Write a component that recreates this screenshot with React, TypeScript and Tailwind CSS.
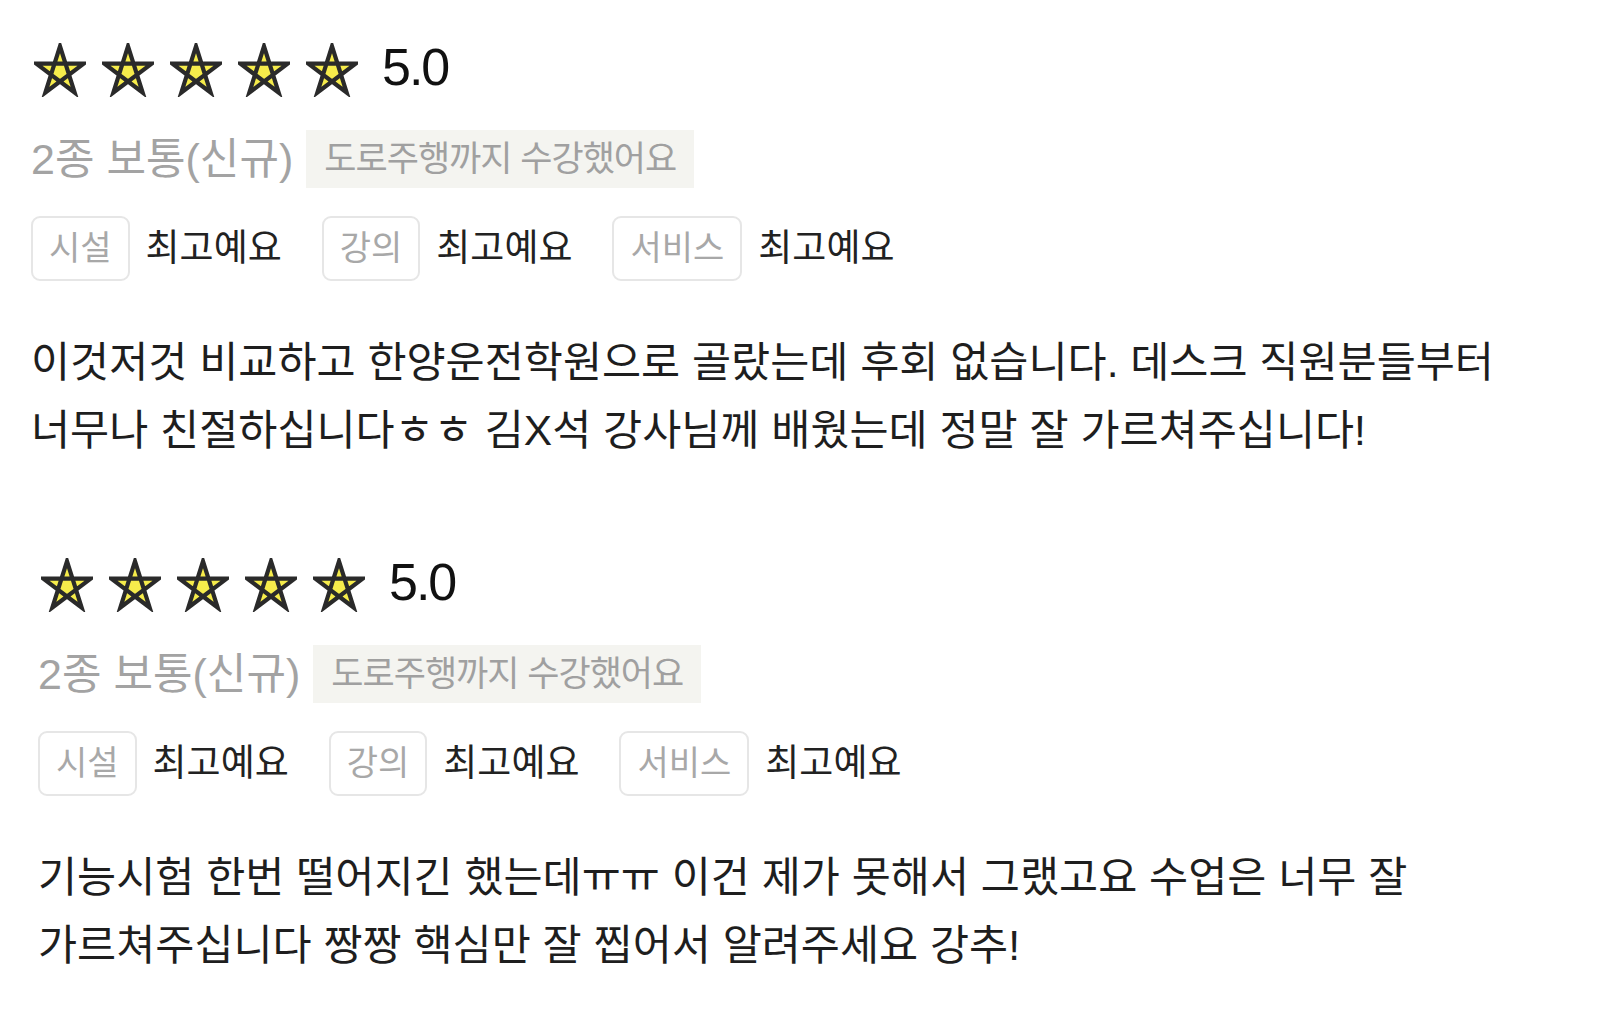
const reviews = [
  {
    ml: "",
    lines: [
      "이것저것 비교하고 한양운전학원으로 골랐는데 후회 없습니다. 데스크 직원분들부터",
      "너무나 친절하십니다ㅎㅎ 김X석 강사님께 배웠는데 정말 잘 가르쳐주십니다!",
    ],
  },
  {
    ml: "ml-[7px]",
    lines: [
      "기능시험 한번 떨어지긴 했는데ㅠㅠ 이건 제가 못해서 그랬고요 수업은 너무 잘",
      "가르쳐주십니다 짱짱 핵심만 잘 찝어서 알려주세요 강추!",
    ],
  },
];

const ratings = ["시설", "강의", "서비스"];

function Star() {
  return (
    <svg width="52" height="54" viewBox="0 0 100 100" preserveAspectRatio="none">
      <polygon
        points="50,6 78.2,91.8 4.4,38.2 95.6,38.2 21.8,91.8"
        fill="#f6ec4b"
        stroke="#2a2a2a"
        strokeWidth="8"
        strokeLinejoin="miter"
      />
    </svg>
  );
}

function Review({ ml, lines }: { ml: string; lines: string[] }) {
  return (
    <div className={ml}>
      {/* Stars + score */}
      <div className="flex items-center h-[54px]">
        <div className="flex gap-[16px] ml-[3px]">
          {[0, 1, 2, 3, 4].map((i) => (
            <Star key={i} />
          ))}
        </div>
        <span className="ml-[24px] -mt-[6px] text-[52px] leading-none tracking-[-2px] text-[#111] font-['Liberation_Sans',sans-serif]">
          5.0
        </span>
      </div>

      {/* License + course */}
      <div className="flex items-center gap-[13px] mt-[33px]">
        <span className="text-[43px] leading-none text-[#a3a3a3]">
          2종 보통(신규)
        </span>
        <span className="h-[58px] flex items-center px-[18px] bg-[#f4f4f0] text-[35px] tracking-[-1px] text-[#a0a0a0]">
          도로주행까지 수강했어요
        </span>
      </div>

      {/* Ratings */}
      <div className="flex items-center gap-10 mt-[28px]">
        {ratings.map((r) => (
          <div key={r} className="flex items-center gap-4">
            <span className="h-[65px] flex items-center px-[16px] border-2 border-[#e6e6e6] rounded-[9px] text-[34px] text-[#a8a8a8]">
              {r}
            </span>
            <span className="text-[37px] text-[#222]">최고예요</span>
          </div>
        ))}
      </div>

      {/* Body */}
      <p className="mt-[48px] text-[42.5px] leading-[68px] text-[#1e1e1e] whitespace-nowrap">
        {lines[0]}
        <br />
        {lines[1]}
      </p>
    </div>
  );
}

export default function App() {
  return (
    <div className="w-[1600px] h-[1018px] bg-white overflow-hidden pl-[31px] pt-[43px] font-['Liberation_Sans','Noto_Sans_CJK_KR',sans-serif]">
      <div className="flex flex-col gap-[93px]">
        {reviews.map((r, i) => (
          <Review key={i} ml={r.ml} lines={r.lines} />
        ))}
      </div>
    </div>
  );
}
